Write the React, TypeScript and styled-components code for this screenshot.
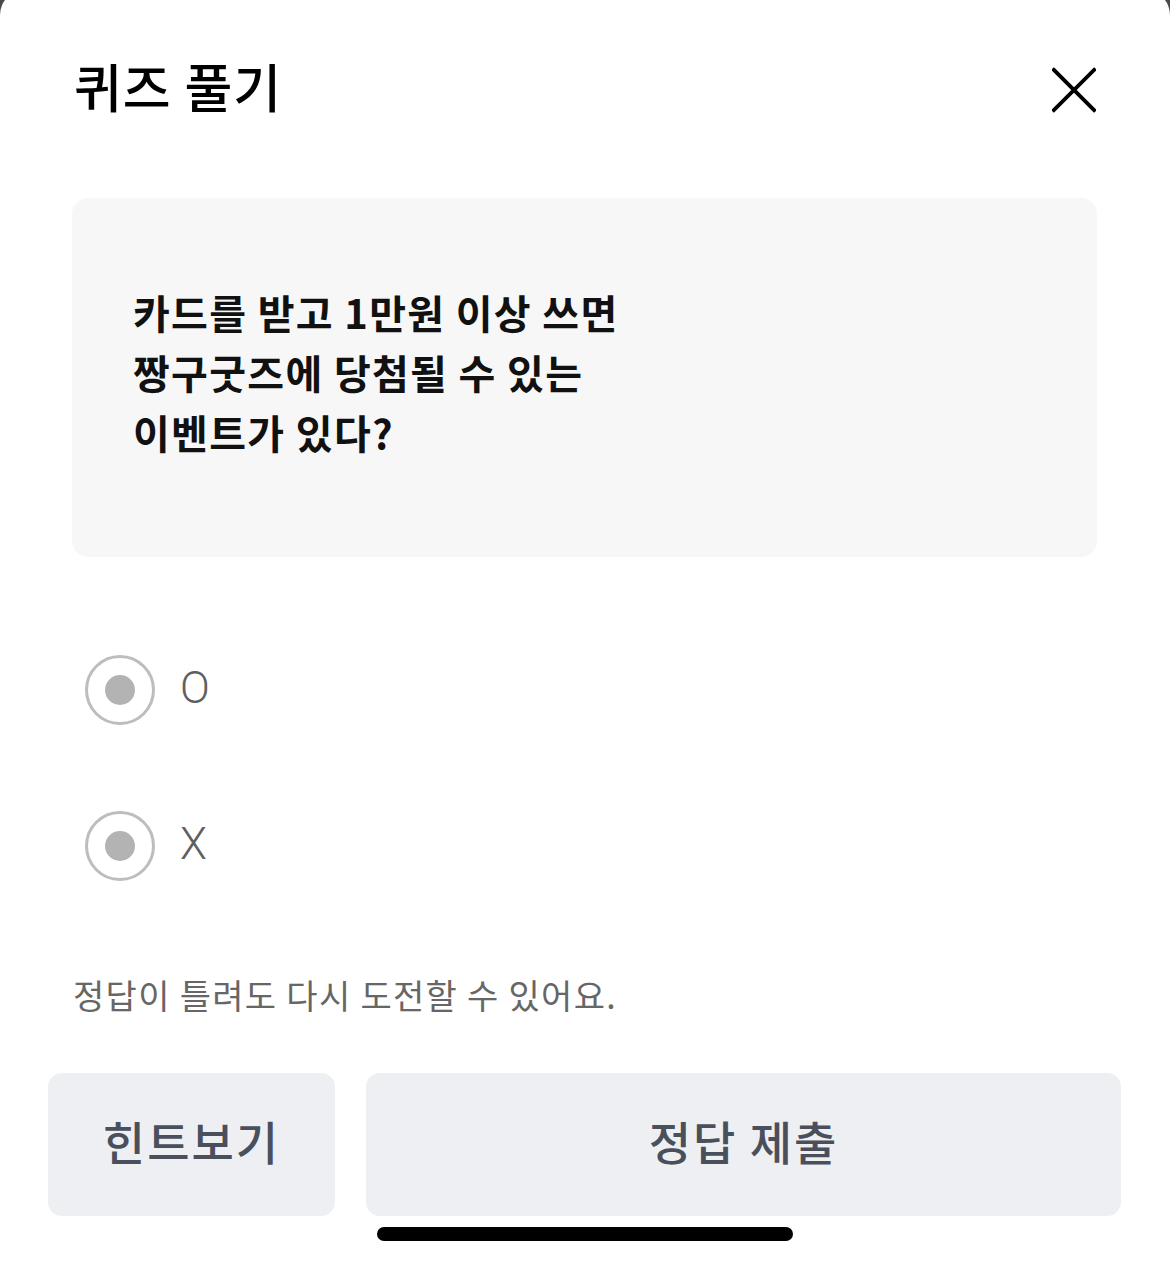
import { useState } from "react";
import styled, { createGlobalStyle } from "styled-components";

// page reset, the dark backdrop shows behind the sheet corners
const GlobalStyle = createGlobalStyle`
  html, body {
    margin: 0;
    padding: 0;
    background: #4a4a4a;
  }
  body {
    font-family: "Noto Sans CJK KR", "Noto Sans", sans-serif;
    overflow: hidden;
  }
`;

const Screen = styled.div`
  width: 1170px;
  height: 1266px;
  overflow: hidden;
  position: relative;
`;

const Sheet = styled.div`
  margin-top: -10px;
  height: 1276px;
  background: #ffffff;
  border-radius: 25px 25px 0 0;
  padding-top: 50px;
  box-sizing: border-box;
  display: flex;
  flex-direction: column;
`;

const Header = styled.div`
  height: 96px;
  padding: 0 74px 0 74px;
  display: flex;
  align-items: center;
  justify-content: space-between;
`;

const Title = styled.h1`
  margin: 0 0 4px;
  font-size: 52px;
  font-weight: 500;
  color: #000;
  line-height: 60px;
  letter-spacing: 1px;
`;

const CloseButton = styled.button`
  width: 44px;
  height: 44px;
  padding: 0;
  border: none;
  background: none;
  display: flex;
  align-items: center;
  justify-content: center;
  margin-top: 3px;
  cursor: pointer;
`;

const QuestionBox = styled.div`
  margin: 62px 73px 0 72px;
  height: 359px;
  box-sizing: border-box;
  background: #f7f7f7;
  border-radius: 16px;
  padding: 0 60px 0 61px;
  display: flex;
  align-items: center;
`;

const QuestionText = styled.p`
  margin: 0 0 12px;
  font-size: 40px;
  font-weight: 600;
  line-height: 60px;
  color: #111;
  letter-spacing: 1.3px;
`;

const Options = styled.div`
  margin-top: 98px;
  padding-left: 85px;
  display: flex;
  flex-direction: column;
  gap: 86px;
`;

const OptionRow = styled.label`
  display: flex;
  align-items: center;
  gap: 25px;
  cursor: pointer;
`;

const RadioOuter = styled.span`
  width: 70px;
  height: 70px;
  box-sizing: border-box;
  border: 3px solid #bdbdbd;
  border-radius: 50%;
  display: flex;
  align-items: center;
  justify-content: center;
`;

const RadioDot = styled.span<{ $on: boolean }>`
  width: 30px;
  height: 30px;
  border-radius: 50%;
  background: ${(p) => (p.$on ? "#8a8a8a" : "#b3b3b3")};
`;

const OptionLabel = styled.span`
  font-family: "Roboto", "Noto Sans", sans-serif;
  font-size: 44px;
  font-weight: 300;
  color: #5f5f5f;
  line-height: 1;
  margin-bottom: 4px;
`;

const Notice = styled.p`
  margin: 90px 0 0 73px;
  font-size: 34px;
  line-height: 48px;
  color: #666;
  letter-spacing: 1.3px;
`;

const ButtonRow = styled.div`
  margin: 54px 49px 0 48px;
  display: grid;
  grid-template-columns: 287px 1fr;
  gap: 31px;
`;

const ActionButton = styled.button`
  height: 143px;
  padding: 0 0 10px;
  border: none;
  border-radius: 14px;
  background: #eeeff3;
  color: #4a4f5c;
  font-family: "Noto Sans CJK KR", sans-serif;
  font-size: 46px;
  font-weight: 500;
  letter-spacing: 2px;
  cursor: pointer;
`;

const HomeIndicator = styled.div`
  position: absolute;
  left: 50%;
  bottom: 25px;
  width: 416px;
  height: 14px;
  margin-left: -208px;
  border-radius: 7px;
  background: #000;
`;

const options = ["O", "X"];

export default function App() {
  const [picked, setPicked] = useState<string | null>(null);

  return (
    <Screen>
      <GlobalStyle />
      <Sheet>
        <Header>
          <Title>퀴즈 풀기</Title>
          <CloseButton aria-label="닫기">
            <svg width="46" height="46" viewBox="0 0 46 46">
              <path d="M2 2 L44 44 M44 2 L2 44" stroke="#000" strokeWidth="4" strokeLinecap="square" />
            </svg>
          </CloseButton>
        </Header>

        <QuestionBox>
          <QuestionText>
            카드를 받고 1만원 이상 쓰면
            <br />
            짱구굿즈에 당첨될 수 있는
            <br />
            이벤트가 있다?
          </QuestionText>
        </QuestionBox>

        <Options>
          {options.map((opt) => (
            <OptionRow key={opt} onClick={() => setPicked(opt)}>
              <RadioOuter>
                <RadioDot $on={picked === opt} />
              </RadioOuter>
              <OptionLabel>{opt}</OptionLabel>
            </OptionRow>
          ))}
        </Options>

        <Notice>정답이 틀려도 다시 도전할 수 있어요.</Notice>

        <ButtonRow>
          <ActionButton>힌트보기</ActionButton>
          <ActionButton>정답 제출</ActionButton>
        </ButtonRow>
      </Sheet>
      <HomeIndicator />
    </Screen>
  );
}
